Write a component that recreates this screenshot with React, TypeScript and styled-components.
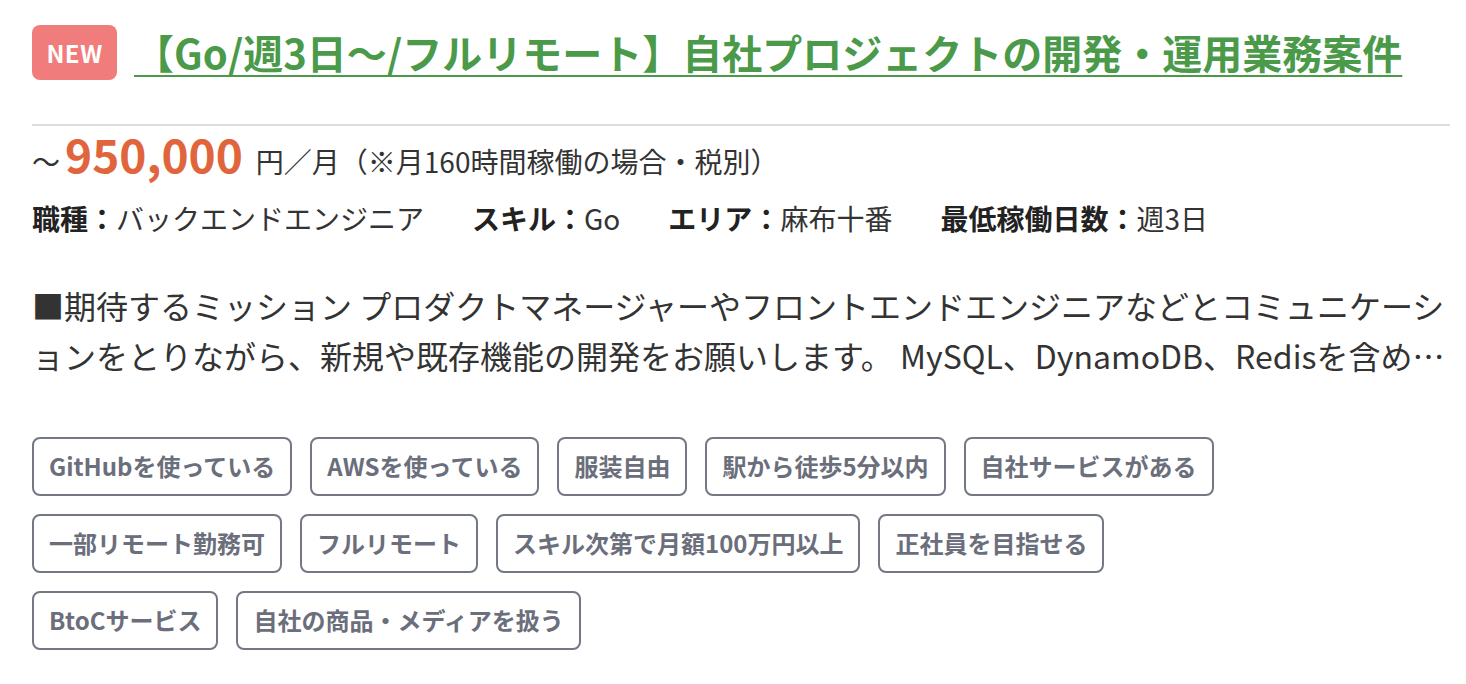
import React from "react";
import styled, { createGlobalStyle } from "styled-components";

const GlobalStyle = createGlobalStyle`
  html, body {
    margin: 0;
    padding: 0;
    background: #ffffff;
  }
  body {
    font-family: "Noto Sans CJK JP", "Noto Sans", sans-serif;
    color: #333333;
  }
`;

const Card = styled.article`
  box-sizing: border-box;
  width: 1466px;
  padding: 24px 16px 0 32px;
`;

const Header = styled.header`
  display: flex;
  align-items: center;
  gap: 17px;
  padding-bottom: 44px;
  border-bottom: 2px solid #dddddd;
`;

const NewBadge = styled.span`
  flex: none;
  display: inline-flex;
  align-items: center;
  justify-content: center;
  width: 85px;
  height: 55px;
  border-radius: 8px;
  background: #f07d7b;
  color: #ffffff;
  font-weight: 700;
  font-size: 24px;
  letter-spacing: 0.5px;
`;

const Title = styled.a`
  color: #4a9a4a;
  font-size: 40px;
  font-weight: 700;
  line-height: 1.4;
  text-decoration: underline;
  text-decoration-thickness: 2px;
  text-underline-offset: 6px;
  cursor: pointer;
`;

const PriceRow = styled.div`
  display: flex;
  align-items: baseline;
  margin-top: -2px;
  line-height: 1.3;
  color: #333333;
`;

const Tilde = styled.span`
  font-size: 28px;
`;

const Price = styled.span`
  font-size: 46px;
  font-weight: 700;
  color: #e0653c;
  margin: 0 13px 0 5px;
`;

const Unit = styled.span`
  font-size: 28px;
`;

const MetaRow = styled.dl`
  display: flex;
  flex-wrap: wrap;
  gap: 0 48px;
  margin: 13px 0 0;
  font-size: 28px;
  line-height: 1.5;
`;

const MetaItem = styled.div`
  display: flex;
`;

const MetaLabel = styled.dt`
  font-weight: 700;
  color: #222222;
`;

const MetaValue = styled.dd`
  margin: 0;
  color: #333333;
`;

const Description = styled.p`
  margin: 41px 0 0;
  font-size: 32px;
  line-height: 50px;
  color: #333333;
  display: -webkit-box;
  -webkit-box-orient: vertical;
  -webkit-line-clamp: 2;
  overflow: hidden;
`;

const TagList = styled.ul`
  list-style: none;
  display: flex;
  flex-wrap: wrap;
  gap: 18px 18px;
  max-width: 1250px;
  margin: 57px 0 0;
  padding: 0;
`;

const Tag = styled.li`
  box-sizing: border-box;
  height: 59px;
  display: inline-flex;
  align-items: center;
  padding: 0 15px;
  border: 2px solid #747784;
  border-radius: 8px;
  color: #6b6e7b;
  font-size: 24px;
  font-weight: 700;
  line-height: 1;
`;

const tags = [
  "GitHubを使っている",
  "AWSを使っている",
  "服装自由",
  "駅から徒歩5分以内",
  "自社サービスがある",
  "一部リモート勤務可",
  "フルリモート",
  "スキル次第で月額100万円以上",
  "正社員を目指せる",
  "BtoCサービス",
  "自社の商品・メディアを扱う",
];

const meta = [
  { label: "職種", value: "バックエンドエンジニア" },
  { label: "スキル", value: "Go" },
  { label: "エリア", value: "麻布十番" },
  { label: "最低稼働日数", value: "週3日" },
];

export default function App() {
  return (
    <>
      <GlobalStyle />
      <Card>
        <Header>
          <NewBadge>NEW</NewBadge>
          <Title>【Go/週3日〜/フルリモート】自社プロジェクトの開発・運用業務案件</Title>
        </Header>
        <PriceRow>
          <Tilde>〜</Tilde>
          <Price>950,000</Price>
          <Unit>円／月（※月160時間稼働の場合・税別）</Unit>
        </PriceRow>
        <MetaRow>
          {meta.map((m) => (
            <MetaItem key={m.label}>
              <MetaLabel>{m.label}：</MetaLabel>
              <MetaValue>{m.value}</MetaValue>
            </MetaItem>
          ))}
        </MetaRow>
        <Description>
          ■期待するミッション プロダクトマネージャーやフロントエンドエンジニアなどとコミュニケーションをとりながら、新規や既存機能の開発をお願いします。 MySQL、DynamoDB、Redisを含めたデータベースの設計・運用や、パフォーマンス改善にも取り組んでいただきます。
        </Description>
        <TagList>
          {tags.map((t) => (
            <Tag key={t}>{t}</Tag>
          ))}
        </TagList>
      </Card>
    </>
  );
}
